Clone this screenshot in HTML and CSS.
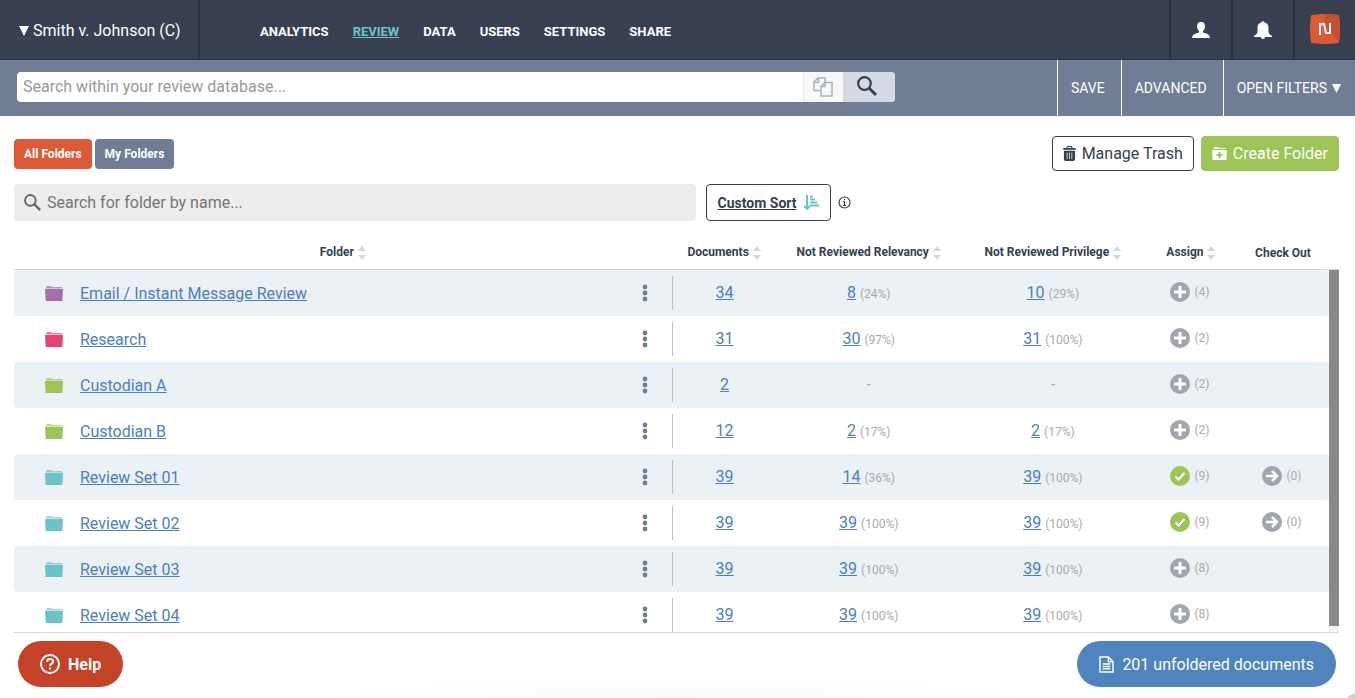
FILE: index.html
```html
<!DOCTYPE html>
<html lang="en">
<head>
	<meta charset="utf-8">
	<title>Review Folders</title>
	<link rel="stylesheet" href="styles.css">
</head>
<body>
	<svg class="sprite" aria-hidden="true">
		<symbol id="folder" viewBox="0 0 18 15">
			<path opacity=".7" d="M1 2.500V1.500L2 0h4l1 1h10v1.500z"/>
			<path d="M0 3.500q0-.5 .5-.5h17q.5 0 .5 .5l-.7 11q0 .5-.5 .5H1.200q-.5 0-.5-.5z"/>
		</symbol>
		<symbol id="dots" viewBox="0 0 6 18">
			<circle cx="3" cy="3" r="2.4"/><circle cx="3" cy="9" r="2.4"/><circle cx="3" cy="15" r="2.4"/>
		</symbol>
		<symbol id="sort" viewBox="0 0 8 14">
			<path d="M4 0l4 5H0zM4 14l4-5H0z"/>
		</symbol>
		<symbol id="caret" viewBox="0 0 10 10">
			<path d="M0 0h10L5 10z"/>
		</symbol>
		<symbol id="plus" viewBox="0 0 20 20">
			<circle cx="10" cy="10" r="10"/><path d="M10 4v12M4 10h12" stroke="#fff" stroke-width="3"/>
		</symbol>
		<symbol id="check" viewBox="0 0 20 20">
			<circle cx="10" cy="10" r="10"/><path d="M5.500 10.500l3 3L14.500 7" fill="none" stroke="#fff" stroke-width="2"/>
		</symbol>
		<symbol id="arrow" viewBox="0 0 20 20">
			<circle cx="10" cy="10" r="10"/><path d="M4 10h10M10 5l5 5-5 5" fill="none" stroke="#fff" stroke-width="2.5"/>
		</symbol>
		<symbol id="search" viewBox="0 0 20 20">
			<circle cx="7.5" cy="7.5" r="6.300" fill="none" stroke="currentColor" stroke-width="2.200"/>
			<path d="M12 12l7 7" stroke="currentColor" stroke-width="2.800"/>
		</symbol>
	</svg>

	<header class="topbar">
		<a class="case" href="#"><svg width="10" height="10"><use href="#caret"/></svg>Smith v. Johnson (C)</a>
		<nav class="main-nav">
			<a href="#">ANALYTICS</a>
			<a href="#" class="active">REVIEW</a>
			<a href="#">DATA</a>
			<a href="#">USERS</a>
			<a href="#">SETTINGS</a>
			<a href="#">SHARE</a>
		</nav>
		<div class="top-icons">
			<button aria-label="Account"><svg width="18" height="18" viewBox="0 0 18 18"><path d="M9 1c3 0 4 2 4 4.500 0 2-1 3.500-2 4.500v1.500l4.500 1.500Q18 14 18 17H0q0-3 2.500-4L7 11.500V10C6 9 5 7.500 5 5.500 5 3 6 1 9 1z"/></svg></button>
			<button aria-label="Notifications"><svg width="18" height="18" viewBox="0 0 18 18"><path d="M9 0q1.500 0 1.500 1.500C13.500 2 14.500 4 14.500 7v4q0 2 3.500 4v1H0v-1q3.500-2 3.500-4V7c0-3 1-5 4-5.500Q7.500 0 9 0zM7 16h4q0 2-2 2t-2-2z"/></svg></button>
			<button class="logo" aria-label="Home"><svg width="30" height="30" viewBox="0 0 30 30"><path d="M2 1q13-2 26 0 1 0 1 1 2 13 0 26 0 1-1 1-13 2-26 0-1 0-1-1-2-13 0-26 0-1 1-1z" fill="#dc5a35"/><path d="M15 0q7 0 13 1 1 0 1 1 2 13 0 26L15 12z" fill="#c84f30"/><path d="M10 21V10h4l2 9h4V9" fill="none" stroke="#fff" stroke-width="2"/></svg></button>
		</div>
	</header>

	<div class="searchbar">
		<form class="db-search">
			<input type="text" aria-label="Search within your review database" placeholder="Search within your review database...">
			<button type="button" class="copy" aria-label="Copy search"><svg width="20" height="20" viewBox="0 0 20 20" fill="none" stroke="#a9b0c1" stroke-width="1.500"><path d="M7.500 13.500H1V5l4-4h7v4.500M5.500 1v4.500H1M8 9.500L12 5.500h7V19H8zM12 5.500v4H8"/></svg></button>
			<button type="button" class="go" aria-label="Search"><svg width="20" height="20"><use href="#search"/></svg></button>
		</form>
		<div class="search-actions">
			<button>SAVE</button>
			<button>ADVANCED</button>
			<button>OPEN FILTERS<svg width="9" height="9"><use href="#caret"/></svg></button>
		</div>
	</div>

	<main>
		<div class="actions">
			<div class="tabs">
				<button class="tab active">All Folders</button>
				<button class="tab">My Folders</button>
			</div>
			<div class="buttons">
				<button class="btn outline"><svg width="13" height="15" viewBox="0 0 14 16"><path d="M4 2V1q0-1 1-1h4q1 0 1 1v1h3q1 0 1 2H0q0-2 1-2zM5 2h4V1H5zM1 5h12v9q0 2-2 2H3q-2 0-2-2z"/><path d="M4.500 7v7M7 7v7M9.500 7v7" stroke="#fff" stroke-width=".8"/></svg>Manage Trash</button>
				<button class="btn green"><svg width="15" height="13" viewBox="0 0 15 13"><path d="M1 2l1-2h4l1 1h7v1z" opacity=".8"/><path d="M0 3h15l-.5 9.500q0 .5-.5 .5H1q-.5 0-.5-.5z"/><path d="M7.500 5v6M4.500 8h6" stroke="#9cc456" stroke-width="2"/></svg>Create Folder</button>
			</div>
		</div>

		<div class="filters">
			<label class="folder-search">
				<svg width="17" height="17"><use href="#search"/></svg>
				<input type="text" aria-label="Search for folder by name" placeholder="Search for folder by name...">
			</label>
			<button class="custom-sort"><span>Custom Sort</span><svg width="15" height="16" viewBox="0 0 15 16" stroke="#6bc2ca" fill="none"><path d="M3 0v13M0 11l3 3 3-3" stroke-width="2"/><path d="M6 1.500h3M6 4.500h5M6 7.500h7M6 10.500h9" stroke-width="2"/></svg></button>
			<button class="info" aria-label="About custom sort"><svg width="13" height="13" viewBox="0 0 13 13" fill="none" stroke="#363f50"><circle cx="6.500" cy="6.500" r="5.500" stroke-width="1.200"/><path d="M5 5.500h1.500v4M5 9.500h3M6 3.500h1" stroke-width="1.200"/></svg></button>
		</div>

		<div class="folders">
			<div class="table-scroll">
				<table>
					<thead>
						<tr>
							<th class="col-folder">Folder<svg class="sort"><use href="#sort"/></svg></th>
							<th class="col-docs">Documents<svg class="sort"><use href="#sort"/></svg></th>
							<th class="col-review">Not Reviewed Relevancy<svg class="sort"><use href="#sort"/></svg></th>
							<th class="col-review">Not Reviewed Privilege<svg class="sort"><use href="#sort"/></svg></th>
							<th class="col-small">Assign<svg class="sort"><use href="#sort"/></svg></th>
							<th class="col-small">Check Out</th>
						</tr>
					</thead>
					<tbody>
						<tr>
							<td><div class="name"><svg class="folder purple"><use href="#folder"/></svg><a href="#">Email / Instant Message Review</a><button aria-label="Folder menu"><svg class="dots"><use href="#dots"/></svg></button></div></td>
							<td><div class="docs"><a href="#">34</a></div></td>
							<td><a href="#">8</a> <small>(24%)</small></td>
							<td><a href="#">10</a> <small>(29%)</small></td>
							<td><div class="badge"><button aria-label="Assign"><svg><use href="#plus"/></svg></button><small>(4)</small></div></td>
							<td></td>
						</tr>
						<tr>
							<td><div class="name"><svg class="folder pink"><use href="#folder"/></svg><a href="#">Research</a><button aria-label="Folder menu"><svg class="dots"><use href="#dots"/></svg></button></div></td>
							<td><div class="docs"><a href="#">31</a></div></td>
							<td><a href="#">30</a> <small>(97%)</small></td>
							<td><a href="#">31</a> <small>(100%)</small></td>
							<td><div class="badge"><button aria-label="Assign"><svg><use href="#plus"/></svg></button><small>(2)</small></div></td>
							<td></td>
						</tr>
						<tr>
							<td><div class="name"><svg class="folder lime"><use href="#folder"/></svg><a href="#">Custodian A</a><button aria-label="Folder menu"><svg class="dots"><use href="#dots"/></svg></button></div></td>
							<td><div class="docs"><a href="#">2</a></div></td>
							<td class="empty">-</td>
							<td class="empty">-</td>
							<td><div class="badge"><button aria-label="Assign"><svg><use href="#plus"/></svg></button><small>(2)</small></div></td>
							<td></td>
						</tr>
						<tr>
							<td><div class="name"><svg class="folder lime"><use href="#folder"/></svg><a href="#">Custodian B</a><button aria-label="Folder menu"><svg class="dots"><use href="#dots"/></svg></button></div></td>
							<td><div class="docs"><a href="#">12</a></div></td>
							<td><a href="#">2</a> <small>(17%)</small></td>
							<td><a href="#">2</a> <small>(17%)</small></td>
							<td><div class="badge"><button aria-label="Assign"><svg><use href="#plus"/></svg></button><small>(2)</small></div></td>
							<td></td>
						</tr>
						<tr>
							<td><div class="name"><svg class="folder teal"><use href="#folder"/></svg><a href="#">Review Set 01</a><button aria-label="Folder menu"><svg class="dots"><use href="#dots"/></svg></button></div></td>
							<td><div class="docs"><a href="#">39</a></div></td>
							<td><a href="#">14</a> <small>(36%)</small></td>
							<td><a href="#">39</a> <small>(100%)</small></td>
							<td><div class="badge done"><button aria-label="Assigned"><svg><use href="#check"/></svg></button><small>(9)</small></div></td>
							<td><div class="badge"><button aria-label="Check out"><svg><use href="#arrow"/></svg></button><small>(0)</small></div></td>
						</tr>
						<tr>
							<td><div class="name"><svg class="folder teal"><use href="#folder"/></svg><a href="#">Review Set 02</a><button aria-label="Folder menu"><svg class="dots"><use href="#dots"/></svg></button></div></td>
							<td><div class="docs"><a href="#">39</a></div></td>
							<td><a href="#">39</a> <small>(100%)</small></td>
							<td><a href="#">39</a> <small>(100%)</small></td>
							<td><div class="badge done"><button aria-label="Assigned"><svg><use href="#check"/></svg></button><small>(9)</small></div></td>
							<td><div class="badge"><button aria-label="Check out"><svg><use href="#arrow"/></svg></button><small>(0)</small></div></td>
						</tr>
						<tr>
							<td><div class="name"><svg class="folder teal"><use href="#folder"/></svg><a href="#">Review Set 03</a><button aria-label="Folder menu"><svg class="dots"><use href="#dots"/></svg></button></div></td>
							<td><div class="docs"><a href="#">39</a></div></td>
							<td><a href="#">39</a> <small>(100%)</small></td>
							<td><a href="#">39</a> <small>(100%)</small></td>
							<td><div class="badge"><button aria-label="Assign"><svg><use href="#plus"/></svg></button><small>(8)</small></div></td>
							<td></td>
						</tr>
						<tr>
							<td><div class="name"><svg class="folder teal"><use href="#folder"/></svg><a href="#">Review Set 04</a><button aria-label="Folder menu"><svg class="dots"><use href="#dots"/></svg></button></div></td>
							<td><div class="docs"><a href="#">39</a></div></td>
							<td><a href="#">39</a> <small>(100%)</small></td>
							<td><a href="#">39</a> <small>(100%)</small></td>
							<td><div class="badge"><button aria-label="Assign"><svg><use href="#plus"/></svg></button><small>(8)</small></div></td>
							<td></td>
						</tr>
					</tbody>
				</table>
			</div>
			<div class="scrollbar"><div class="thumb"></div></div>
		</div>
	</main>

	<footer>
		<button class="help"><svg width="20" height="20" viewBox="1 1 20 20" fill="none" stroke="#fff" stroke-width="2"><circle cx="11" cy="11" r="9"/><path d="M8 9q0-3 3-3t3 2.500q0 1.500-1.500 2.300T11 13M11 14.500v2"/></svg>Help</button>
		<button class="unfoldered"><svg width="15" height="17" viewBox="0 0 16 18" fill="none" stroke="#fff" stroke-width="1.600"><path d="M1 1h9l5 5v11H1zM10 1v5h5M4 8.500h8M4 11h8M4 13.500h8"/></svg>201 unfoldered documents</button>
	</footer>
	<span class="corner"></span>
</body>
</html>
```
FILE: styles.css
```css
* {
	box-sizing: border-box;
}

body {
	margin: 0;
	height: 100vh;
	display: flex;
	flex-direction: column;
	position: relative;
	overflow: hidden;
	font-family: Roboto, sans-serif;
	font-size: 16px;
	color: #363f50;
	background-color: #fff;
}

button,
input {
	font-family: inherit;
	font-size: inherit;
	color: inherit;
	border: none;
	padding: 0;
	background: none;
}

button {
	cursor: pointer;
}

svg {
	display: block;
	flex: none;
}

svg:not([fill]) {
	fill: currentColor;
}

.sprite {
	position: absolute;
	width: 0;
	height: 0;
}

/* top bar */
.topbar {
	display: flex;
	flex: none;
	height: 60px;
	background-color: #384051;
	border-bottom: 1px solid #293141;
	color: #fff;
}

.topbar a {
	color: inherit;
	text-decoration: none;
}

.topbar .case {
	display: flex;
	align-items: center;
	gap: 4px;
	padding: 2px 18px 0 19px;
	width: 200px;
	white-space: nowrap;
	border-right: 2px solid #293141;
}

.main-nav {
	display: flex;
	align-items: center;
	gap: 24px;
	padding: 4px 60px 0;
	font-size: 13px;
	font-weight: bold;
}

.topbar .active {
	color: #6bc2ca;
	text-decoration: underline;
}

.top-icons {
	display: flex;
	margin-left: auto;
}

.top-icons button {
	display: flex;
	align-items: center;
	justify-content: center;
	width: 62px;
	border-left: 2px solid #293141;
}

.top-icons .logo {
	padding-bottom: 2px;
}

/* database search */
.searchbar {
	display: flex;
	flex: none;
	height: 56px;
	background-color: #717d94;
}

.db-search {
	display: flex;
	flex: 1;
	height: 30px;
	margin: 12px 162px 0 17px;
	border-radius: 4px;
	overflow: hidden;
	background-color: #fff;
}

.db-search input {
	flex: 1;
	min-width: 0;
	padding: 0 6px 2px;
	outline: none;
}

.db-search input::placeholder {
	color: #999;
}

.db-search button {
	display: flex;
	align-items: center;
	justify-content: center;
}

.db-search .copy {
	width: 40px;
	background-color: #f8f8f8;
	border-left: 1px solid #e8e8e8;
}

.db-search .go {
	width: 52px;
	padding: 0 4px 2px 0;
	background-color: #d5d9e2;
}

.search-actions {
	display: flex;
	color: #fff;
	font-size: 14px;
}

.search-actions button {
	display: flex;
	align-items: center;
	gap: 5px;
	padding: 0 16px 0 13px;
	border-left: 1px solid #fff;
	white-space: nowrap;
}

.search-actions button:last-child {
	padding-right: 14px;
}

/* folder page */
main {
	display: flex;
	flex-direction: column;
	flex: 1;
	min-height: 0;
	padding: 20px 16px 0 14px;
}

.actions,
.tabs,
.buttons,
.filters {
	display: flex;
	align-items: center;
}

.actions {
	justify-content: space-between;
}

.tabs {
	gap: 3px;
}

.tab {
	height: 30px;
	padding: 0 10px;
	border-radius: 4px;
	background-color: #717d94;
	color: #fff;
	font-size: 12px;
	font-weight: bold;
}

.tab.active {
	background-color: #dc5a35;
}

.buttons {
	gap: 7px;
}

.btn {
	display: flex;
	align-items: center;
	gap: 6px;
	height: 35px;
	padding: 0 10px;
	border: 1px solid #363f50;
	border-radius: 4px;
}

.btn.green {
	border-color: #9cc456;
	background-color: #9cc456;
	color: #fff;
}

.filters {
	margin-top: 13px;
}

.folder-search {
	display: flex;
	align-items: center;
	gap: 6px;
	width: calc(50% + 19px);
	height: 37px;
	padding: 0 10px;
	border-radius: 4px;
	background-color: #ececec;
	color: #666;
}

.folder-search input {
	flex: 1;
	outline: none;
}

.folder-search input::placeholder {
	color: #757575;
}

.custom-sort {
	display: flex;
	align-items: center;
	gap: 8px;
	height: 37px;
	margin-left: 10px;
	padding: 0 11px;
	border: 1px solid #363f50;
	border-radius: 4px;
	font-size: 14px;
	font-weight: bold;
	text-decoration: underline;
}

.info {
	margin-left: 7px;
}

/* folder table */
.folders {
	display: flex;
	flex: 1;
	min-height: 0;
	margin-top: 15px;
	border-bottom: 1px solid #d5d7da;
}

.table-scroll {
	flex: 1;
	overflow-y: auto;
	scrollbar-width: none;
}

table {
	width: 100%;
	table-layout: fixed;
	border-collapse: separate;
	border-spacing: 0;
}

th {
	position: sticky;
	top: 0;
	height: 34px;
	padding: 0;
	border-bottom: 1px solid #d5d7da;
	background-color: #fff;
	font-size: 12px;
	white-space: nowrap;
}

.col-folder {
	width: 50%;
}

.col-docs {
	width: 8%;
}

.col-review {
	width: 14%;
}

.col-small {
	width: 7%;
}

.sort {
	display: inline-block;
	width: 8px;
	height: 14px;
	margin-left: 4px;
	vertical-align: middle;
	color: #d3d8e0;
}

td {
	height: 46px;
	padding: 0;
	text-align: center;
}

td + td + td {
	padding-bottom: 2px;
}

tbody tr:nth-child(odd) td {
	background-color: #ebf0f4;
}

td:first-child {
	border-radius: 4px 0 0 4px;
}

td:last-child {
	border-radius: 0 4px 4px 0;
}

td a {
	color: #4a80bd;
}

small {
	font-size: 12px;
	color: #aaa;
}

.empty {
	color: #aaa;
}

.name {
	display: flex;
	align-items: center;
	padding: 0 24px 0 31px;
}

.name a {
	margin-left: 17px;
}

.name button {
	margin-left: auto;
	color: #717d94;
}

.dots {
	width: 6px;
	height: 18px;
}

.folder {
	width: 18px;
	height: 15px;
}

.purple {
	color: #a56eac;
}

.pink {
	color: #e14572;
}

.lime {
	color: #9cc456;
}

.teal {
	color: #6bc2ca;
}

.docs {
	height: 34px;
	line-height: 34px;
	border-left: 1px solid #bfbfbf;
}

.badge {
	display: flex;
	align-items: center;
	justify-content: center;
	gap: 4px;
	padding: 0 2px 1px 0;
}

.badge button {
	color: #a0a5b0;
}

.badge svg {
	width: 20px;
	height: 20px;
}

.badge.done button {
	color: #9cc456;
}

.scrollbar {
	width: 10px;
	margin-top: 33px;
	padding-bottom: 6px;
	border-top: 1px solid #d5d7da;
	background-color: #f2f2f2;
}

.thumb {
	height: 100%;
	background-color: #888;
}

/* bottom bar */
footer {
	display: flex;
	align-items: center;
	justify-content: space-between;
	flex: none;
	height: 65px;
	padding: 0 19px 3px 18px;
	background: radial-gradient(ellipse 28% 24px at 50% 100%, #f9fafb, #fff);
}

.help,
.unfoldered {
	display: flex;
	align-items: center;
	gap: 8px;
	height: 46px;
	padding: 0 22px;
	border-radius: 23px;
	color: #fff;
}

.help {
	background-color: #c44225;
	font-weight: bold;
}

.unfoldered {
	background-color: #4f84be;
}

.corner {
	position: absolute;
	right: -10px;
	bottom: -16px;
	width: 20px;
	height: 20px;
	border-radius: 50%;
	background-color: #a9dce2;
}
```
